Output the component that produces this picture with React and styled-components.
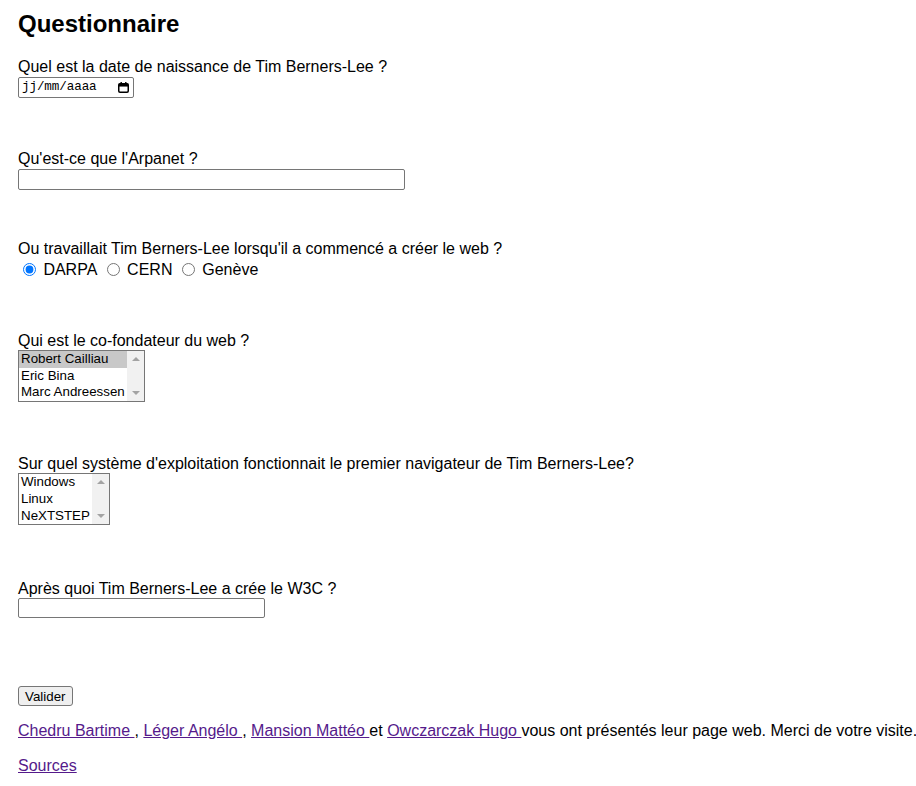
import React from "react";
import styled, { createGlobalStyle } from "styled-components";

const GlobalStyle = createGlobalStyle`
  body {
    margin: 0;
    background: #ffffff;
    color: #000000;
    font-family: "Liberation Sans", Arial, sans-serif;
  }
`;

const Page = styled.div`
  padding: 10px 0 0 18px;
  font-size: 16px;
`;

const Title = styled.h1`
  margin: 0;
  font-size: 24px;
  font-weight: bold;
  line-height: 27.6px;
`;

const Form = styled.form`
  margin: 20.7px 0 0;
`;

const Question = styled.div`
  margin-top: ${(p) => p.$top || 0}px;
`;

const Label = styled.div`
  line-height: 18.4px;
`;

const TextField = styled.input`
  display: block;
  box-sizing: border-box;
  width: ${(p) => p.$width}px;
  height: ${(p) => p.$height || 21}px;
  margin: 0;
  padding: 1px 2px;
  border: 1px solid #767676;
  border-radius: 2px;
  font-family: "Liberation Sans", Arial, sans-serif;
  font-size: 13.33px;
  background: #ffffff;
  outline: none;
`;

const DateBox = styled.div`
  box-sizing: border-box;
  width: 116px;
  height: 21px;
  border: 1px solid #767676;
  border-radius: 2px;
  display: flex;
  align-items: center;
  justify-content: space-between;
  padding: 0 4px 0 3px;
`;

const DateText = styled.span`
  font-family: "Liberation Mono", "DejaVu Sans Mono", monospace;
  font-size: 12.6px;
  letter-spacing: -0.1px;
  color: #000000;
`;

const RadioRow = styled.div`
  display: flex;
  align-items: center;
  height: 22px;
`;

const RadioOption = styled.label`
  display: inline-flex;
  align-items: center;
  margin-right: 4.4px;
`;

const Radio = styled.input`
  width: 13px;
  height: 13px;
  margin: 0 7.4px 0 5px;
  accent-color: #0075ff;
`;

const ListBox = styled.div`
  box-sizing: border-box;
  width: ${(p) => p.$width}px;
  height: 52px;
  border: 1px solid #767676;
  display: flex;
  overflow: hidden;
  background: #ffffff;
`;

const Options = styled.div`
  flex: 1;
  display: flex;
  flex-direction: column;
`;

const Option = styled.div`
  height: 16.67px;
  line-height: 16px;
  padding: 0 2px;
  font-size: 13.33px;
  white-space: nowrap;
  background: ${(p) => (p.$selected ? "#c8c8c8" : "transparent")};
`;

const ScrollTrack = styled.div`
  width: 17px;
  background: #f1f1f1;
  display: flex;
  flex-direction: column;
  justify-content: space-between;
  align-items: center;
  padding: 6px 0;
  box-sizing: border-box;
`;

const Arrow = styled.span`
  width: 0;
  height: 0;
  border-left: 4px solid transparent;
  border-right: 4px solid transparent;
  ${(p) =>
    p.$down
      ? "border-top: 4px solid #a3a3a3;"
      : "border-bottom: 4px solid #a3a3a3;"}
`;

const Button = styled.button`
  display: block;
  margin: ${(p) => p.$top}px 0 0;
  box-sizing: border-box;
  height: 20px;
  padding: 0 6px;
  background: #efefef;
  border: 1px solid #767676;
  border-radius: 3px;
  font-family: "Liberation Sans", Arial, sans-serif;
  font-size: 13.33px;
  color: #000000;
`;

const Credits = styled.p`
  margin: 16px 0 0;
  line-height: 18.4px;
  white-space: nowrap;
`;

const Link = styled.a`
  color: #551a8b;
  text-decoration: underline;
`;

const CalendarIcon = () => (
  <svg width="11" height="11" viewBox="0 0 11 11">
    <rect x="0.75" y="1.75" width="9.5" height="8.5" rx="1.2" fill="none" stroke="#000" strokeWidth="1.5" />
    <rect x="0.75" y="1.75" width="9.5" height="2.8" fill="#000" />
    <rect x="2.5" y="0" width="1.4" height="2" fill="#000" />
    <rect x="7.1" y="0" width="1.4" height="2" fill="#000" />
  </svg>
);

const Listbox = ({ width, options, selected }) => (
  <ListBox $width={width}>
    <Options>
      {options.map((o) => (
        <Option key={o} $selected={o === selected}>
          {o}
        </Option>
      ))}
    </Options>
    <ScrollTrack>
      <Arrow />
      <Arrow $down />
    </ScrollTrack>
  </ListBox>
);

export default function App() {
  return (
    <>
      <GlobalStyle />
      <Page>
        <Title>Questionnaire</Title>
        <Form onSubmit={(e) => e.preventDefault()}>
          <Question>
            <Label>Quel est la date de naissance de Tim Berners-Lee ?</Label>
            <DateBox>
              <DateText>jj/mm/aaaa</DateText>
              <CalendarIcon />
            </DateBox>
          </Question>

          <Question $top={52.5}>
            <Label>Qu'est-ce que l'Arpanet ?</Label>
            <TextField type="text" $width={387} />
          </Question>

          <Question $top={50.6}>
            <Label>Ou travaillait Tim Berners-Lee lorsqu'il a commencé a créer le web ?</Label>
            <RadioRow>
              <RadioOption>
                <Radio type="radio" name="lieu" defaultChecked />
                DARPA
              </RadioOption>
              <RadioOption>
                <Radio type="radio" name="lieu" />
                CERN
              </RadioOption>
              <RadioOption>
                <Radio type="radio" name="lieu" />
                Genève
              </RadioOption>
            </RadioRow>
          </Question>

          <Question $top={51}>
            <Label>Qui est le co-fondateur du web ?</Label>
            <Listbox
              width={127}
              options={["Robert Cailliau", "Eric Bina", "Marc Andreessen"]}
              selected="Robert Cailliau"
            />
          </Question>

          <Question $top={53}>
            <Label>
              Sur quel système d'exploitation fonctionnait le premier navigateur de Tim Berners-Lee?
            </Label>
            <Listbox width={92} options={["Windows", "Linux", "NeXTSTEP"]} />
          </Question>

          <Question $top={54.3}>
            <Label>Après quoi Tim Berners-Lee a crée le W3C ?</Label>
            <TextField type="text" $width={247} $height={20} />
          </Question>

          <Button type="submit" $top={68}>
            Valider
          </Button>
        </Form>

        <Credits>
          <Link href="#">Chedru Bartime </Link>, <Link href="#">Léger Angélo </Link>,{" "}
          <Link href="#">Mansion Mattéo </Link>et <Link href="#">Owczarczak Hugo </Link>vous ont
          présentés leur page web. Merci de votre visite.
        </Credits>
        <Credits>
          <Link href="#">Sources</Link>
        </Credits>
      </Page>
    </>
  );
}
